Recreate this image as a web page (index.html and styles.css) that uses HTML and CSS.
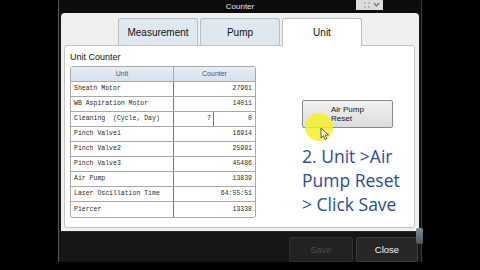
FILE: index.html
```html
<!DOCTYPE html>
<html>
<head>
<meta charset="utf-8">
<link rel="stylesheet" href="styles.css">
</head>
<body>
<div class="window">
  <div class="titlebar">
    <span class="title">Counter</span>
    <span class="ticon"><svg width="27" height="10" viewBox="0 0 27 10"><rect width="27" height="10" fill="#dcdcdc"/><path d="M8 3h2M8 7h2M12 3h2M12 7h2" stroke="#999" stroke-width="1"/><path d="M18 3l2.5 3 2.5-3" stroke="#777" stroke-width="1.3" fill="none"/></svg></span>
  </div>
  <div class="client">
    <div class="tabs">
      <div class="tab">Measurement</div>
      <div class="tab">Pump</div>
      <div class="tab active">Unit</div>
    </div>
    <div class="panel">
      <div class="leftcol">
        <div class="label">Unit Counter</div>
        <div class="table">
          <div class="row head"><div class="c1">Unit</div><div class="c2">Counter</div></div>
          <div class="row"><div class="c1">Sheath Motor</div><div class="c2">27961</div></div>
          <div class="row"><div class="c1">WB Aspiration Motor</div><div class="c2">14011</div></div>
          <div class="row"><div class="c1">Cleaning&nbsp;&nbsp;(Cycle,&nbsp;Day)</div><div class="c2 split"><span class="s1">7</span><span class="s2">0</span></div></div>
          <div class="row"><div class="c1">Pinch Valve1</div><div class="c2">16914</div></div>
          <div class="row"><div class="c1">Pinch Valve2</div><div class="c2">25991</div></div>
          <div class="row"><div class="c1">Pinch Valve3</div><div class="c2">45486</div></div>
          <div class="row"><div class="c1">Air Pump</div><div class="c2">13839</div></div>
          <div class="row"><div class="c1">Laser Oscillation Time</div><div class="c2">64:55:51</div></div>
          <div class="row last"><div class="c1">Piercer</div><div class="c2">13338</div></div>
        </div>
      </div>
      <div class="rightcol">
        <div class="btnwrap">
          <div class="resetbtn">Air Pump<br>Reset</div>
          <div class="spot"></div>
          <svg class="cursor" width="9" height="13" viewBox="0 0 9 13"><path d="M1 1v10l2.5-2.3 1.8 3.8 1.6-.8-1.8-3.7H8.5z" fill="#fff" stroke="#333" stroke-width="0.8"/></svg>
        </div>
        <div class="note">2. Unit &gt;Air<br>Pump Reset<br>&gt; Click Save</div>
      </div>
    </div>
  </div>
  <div class="footer">
    <div class="fbtn disabled">Save</div>
    <div class="fbtn">Close</div>
  </div>
  <div class="grip"></div>
</div>
</body>
</html>
```
FILE: styles.css
```css
html, body {
  margin: 0;
  padding: 0;
  background: #000;
  width: 480px;
  height: 270px;
  overflow: hidden;
}
.window {
  position: relative;
  margin-left: 58px;
  width: 362px;
  height: 262px;
  background: #141414;
  border-left: 1px solid #555;
  border-right: 1px solid #3a3a3a;
  display: flex;
  flex-direction: column;
  font-family: "Liberation Sans", Arial, sans-serif;
}
.titlebar {
  position: relative;
  height: 13px;
  display: flex;
  align-items: center;
  justify-content: center;
  background: #0c0c0c;
}
.title {
  color: #e6e6e6;
  font-size: 8px;
}
.ticon {
  position: absolute;
  left: 297px;
  top: 0;
  height: 10px;
  display: flex;
}
.client {
  margin: 0 2px;
  height: 219px;
  background: #efefef;
  border-radius: 4px 4px 0 0;
  display: flex;
  flex-direction: column;
  box-sizing: border-box;
  padding-bottom: 3px;
}
.tabs {
  display: flex;
  gap: 2px;
  padding: 5px 0 0 57px;
  height: 27px;
}
.tab {
  width: 80px;
  height: 27px;
  box-sizing: border-box;
  background: #dfe7ef;
  border: 1px solid #b9bec4;
  border-bottom: none;
  border-radius: 3px 3px 0 0;
  display: flex;
  align-items: center;
  justify-content: center;
  font-size: 10px;
  color: #111;
  padding-top: 1px;
}
.tab.active {
  background: #fff;
  position: relative;
  z-index: 1;
  height: 28px;
}
.panel {
  flex: 1;
  margin: 0 4px 0 3px;
  background: #fff;
  border: 1px solid #c4c4c4;
  border-radius: 3px;
  display: flex;
}
.leftcol {
  padding: 4px 0 0 5px;
}
.label {
  font-size: 9px;
  color: #111;
  height: 16px;
  line-height: 15px;
}
.table {
  width: 186px;
  border: 1px solid #a8a8a8;
  border-radius: 3px;
  box-sizing: border-box;
  overflow: hidden;
}
.row {
  display: flex;
  height: 15px;
  border-bottom: 1px solid #a8a8a8;
  box-sizing: border-box;
  font-family: "Liberation Mono", "DejaVu Sans Mono", monospace;
  font-size: 6.5px;
  color: #2a2a2a;
}
.row.last {
  border-bottom: none;
}
.c1 {
  width: 103px;
  box-sizing: border-box;
  border-right: 1px solid #777;
  padding-left: 3px;
  display: flex;
  align-items: center;
  white-space: nowrap;
}
.c2 {
  flex: 1;
  display: flex;
  align-items: center;
  justify-content: flex-end;
  padding-right: 3px;
}
.c2.split {
  padding-right: 0;
}
.s1 {
  width: 40px;
  height: 100%;
  box-sizing: border-box;
  display: flex;
  align-items: center;
  justify-content: flex-end;
  padding-right: 2px;
  border-right: 1px solid #777;
}
.s2 {
  flex: 1;
  display: flex;
  align-items: center;
  justify-content: flex-end;
  padding-right: 3px;
}
.row.head {
  background: linear-gradient(#e6eef6, #d5e1ec);
  font-family: "Liberation Sans", Arial, sans-serif;
  font-size: 7px;
  color: #555;
}
.row.head .c1 {
  justify-content: center;
  padding-left: 0;
  border-right-color: #aaa;
}
.row.head .c2 {
  justify-content: center;
  padding-right: 0;
}
.rightcol {
  margin-left: 46px;
  padding-top: 54px;
}
.btnwrap {
  position: relative;
  width: 91px;
  height: 28px;
}
.resetbtn {
  width: 91px;
  height: 28px;
  box-sizing: border-box;
  border: 1px solid #8a8a8a;
  border-radius: 2px;
  background: linear-gradient(#f2f2f2, #dcdcdc);
  font-size: 8px;
  line-height: 9px;
  color: #111;
  padding: 4px 0 0 28px;
}
.spot {
  position: absolute;
  left: 3px;
  top: 13px;
  width: 28px;
  height: 28px;
  border-radius: 50%;
  background: rgba(246, 240, 40, 0.85);
}
.cursor {
  position: absolute;
  left: 18px;
  top: 27px;
}
.note {
  margin-top: 16px;
  margin-left: 0;
  font-family: "Open Sans", sans-serif;
  font-size: 17.5px;
  line-height: 24px;
  color: #2b4b9b;
  white-space: nowrap;
}
.footer {
  flex: 1;
  display: flex;
  justify-content: flex-end;
  align-items: flex-start;
  gap: 3px;
  padding: 5px 3px 0 0;
  background: #161616;
  border-top: 1px solid #2a2a2a;
}
.fbtn {
  width: 62px;
  height: 25px;
  box-sizing: border-box;
  background: #262626;
  border: 1px solid #3c3c3c;
  border-radius: 2px;
  display: flex;
  align-items: center;
  justify-content: center;
  color: #f4f4f4;
  font-size: 9.5px;
}
.fbtn.disabled {
  width: 64px;
  color: #4a4a4a;
  background: #222;
  border-color: #2e2e2e;
}
.grip {
  position: absolute;
  right: -2px;
  top: 228px;
  width: 7px;
  height: 16px;
  background: linear-gradient(#7c8a98, #4a5560);
  border-radius: 2px;
}
```
